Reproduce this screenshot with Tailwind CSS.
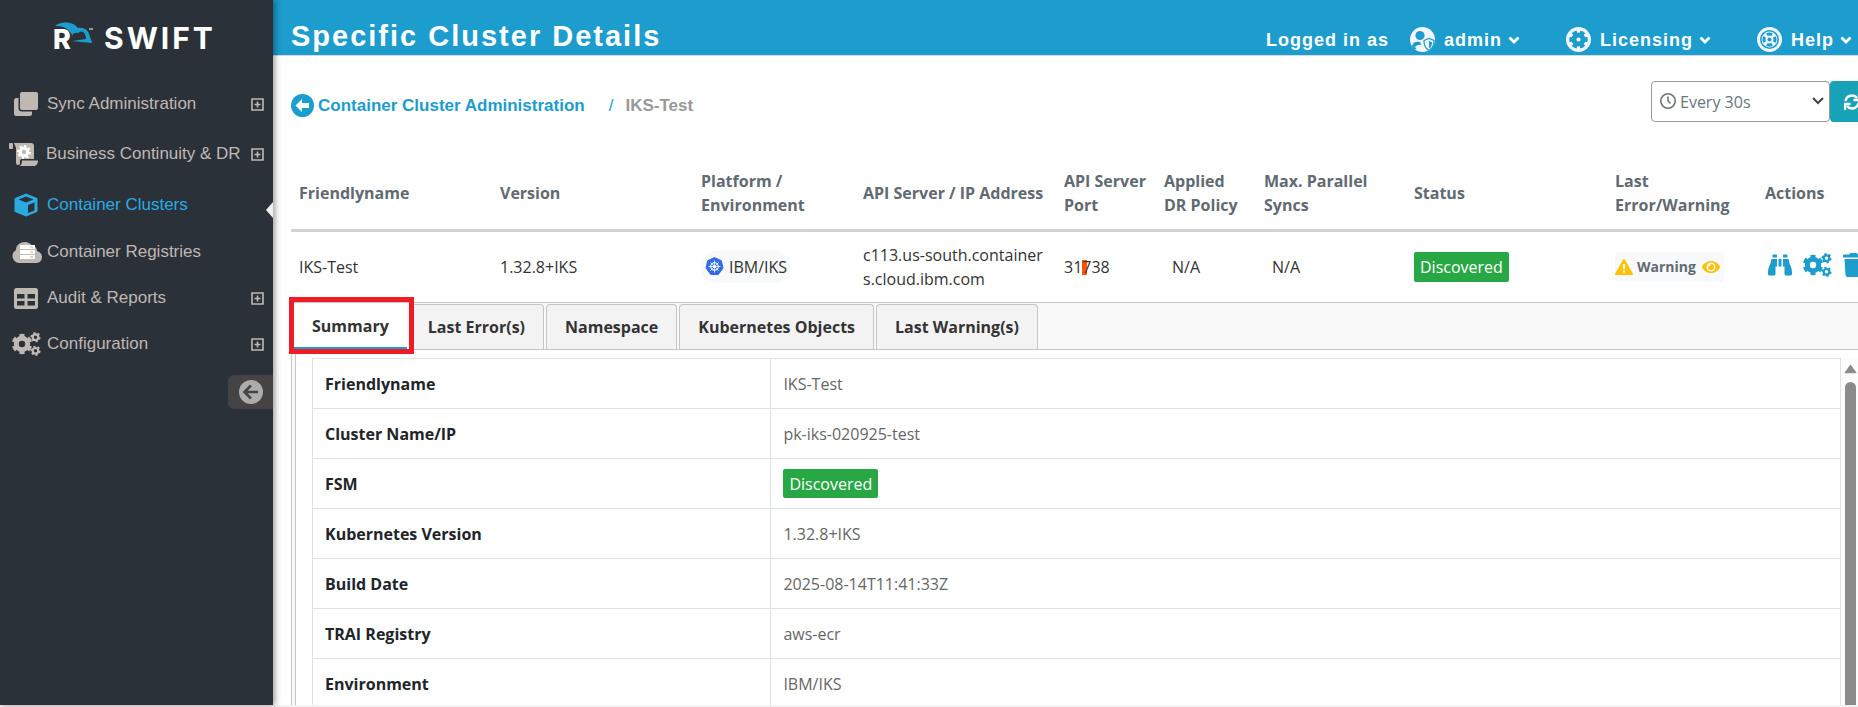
<!DOCTYPE html>
<html lang="en">
<head>
    <meta charset="UTF-8">
    <meta name="viewport" content="width=device-width, initial-scale=1.0">
    <title>Specific Cluster Details</title>
    <script src="https://cdn.jsdelivr.net/npm/@tailwindcss/browser@4"></script>
</head>
<body class="flex h-screen flex-col overflow-hidden bg-white font-['Open_Sans',sans-serif] text-base text-[#333]">
    <!-- shared icons -->
    <svg class="hidden">
        <symbol id="plus-box" viewBox="0 0 13 13">
            <path d="M1 1h11v11H1zM6.5 3.5v6M3.5 6.5h6" fill="none" stroke="currentColor" stroke-width="1.6"/>
        </symbol>
        <symbol id="chevron" viewBox="0 0 12 8">
            <path d="M1.500 1.500L6 6l4.500-4.500" fill="none" stroke="currentColor" stroke-width="2.8"/>
        </symbol>
        <symbol id="cogs" viewBox="0 0 29 24">
            <g fill="none" stroke="currentColor">
                <circle cx="10" cy="12" r="5.700" stroke-width="5"/>
                <circle cx="10" cy="12" r="8.700" stroke-width="3" pathLength="12" stroke-dasharray="1.100 .9" stroke-dashoffset="-.45"/>
                <circle cx="23.500" cy="5.200" r="2.800" stroke-width="2.200"/>
                <circle cx="23.500" cy="5.200" r="4.200" stroke-width="1.800" pathLength="12" stroke-dasharray="1 1"/>
                <circle cx="23.500" cy="18.800" r="2.800" stroke-width="2.200"/>
                <circle cx="23.500" cy="18.800" r="4.200" stroke-width="1.800" pathLength="12" stroke-dasharray="1 1"/>
            </g>
        </symbol>
    </svg>

    <div class="flex min-h-0 flex-1">
        <!-- sidebar -->
        <aside class="relative z-10 flex w-[273px] shrink-0 flex-col bg-[#2b3139] font-['Liberation_Sans',sans-serif] text-[17px] text-[#bfb8b3] shadow-[2px_0_6px_rgba(0,0,0,0.4)]">
            <a href="#" class="flex h-[76px] items-center pl-[53px] font-['Inter',sans-serif] font-bold text-white">
                <span class="relative w-[51px] pt-1 text-[27px] leading-8 font-extrabold">R
                    <svg class="absolute top-[2px] left-0 h-8 w-11" viewBox="0 0 44 32">
                        <path d="M2 4C7-1 20-1 25 6c7-1 11 3 12 9 1 3 2 5 2 6l-20-2 14-2c0-6-4-10-8-6-3-1-5 0-6 3 0-2-1-4-3-5C13 5 8 4 2 4z" fill="#1c9dcd"/>
                        <path d="M36 7h4" stroke="white"/>
                    </svg>
                </span>
                <span class="text-[30px] tracking-[3px]">SWIFT</span>
            </a>
            <nav class="flex flex-col">
                <a href="#" class="flex h-14 items-center gap-[9px] pr-[9px] pl-[14px]">
                    <svg class="h-6 w-6" viewBox="0 0 24 24" fill="currentColor">
                        <rect x="6" width="18" height="18" rx="2"/>
                        <path d="M4.500 6h-2A2.500 2.500 0 0 0 0 8.500v13A2.500 2.500 0 0 0 2.500 24h13a2.500 2.500 0 0 0 2.500-2.500v-2H8A3.500 3.500 0 0 1 4.500 16z"/>
                    </svg>
                    Sync Administration
                    <svg class="ml-auto h-[13px] w-[13px]"><use href="#plus-box"/></svg>
                </a>
                <a href="#" class="flex h-11 items-center gap-2 pr-[9px] pl-2 whitespace-nowrap">
                    <svg class="h-[23px] w-[30px] shrink-0" viewBox="0 0 30 23" fill="currentColor">
                        <rect x="1" width="4" height="6" rx="1"/>
                        <path d="M6 0h17a3 3 0 0 1 3 3v13H14a2 2 0 0 0-2 2v2a2 2 0 0 1-4 0V5z"/>
                        <path d="M14 17.500h16c0 3-1.500 5.500-4 5.500H10c3 0 4-2 4-5.500z"/>
                        <g fill="none" stroke="#fff"><circle cx="16" cy="9" r="3.800" stroke-width="3.200"/><circle cx="16" cy="9" r="6" stroke-width="2" pathLength="16" stroke-dasharray="1 1"/></g>
                    </svg>
                    Business Continuity &amp; DR
                    <svg class="ml-auto h-[13px] w-[13px] shrink-0"><use href="#plus-box"/></svg>
                </a>
                <a href="#" class="relative flex h-[58px] items-center gap-[9px] pl-[14px] text-[#29abe2]">
                    <svg class="h-6 w-6" viewBox="0 0 24 24">
                        <path d="M12 1L23 5.500v13L12 23 1 18.500v-13z" fill="currentColor" stroke="currentColor" stroke-linejoin="round"/>
                        <path d="M12 3.500l7.500 3L12 9.500l-7.500-3zM14 12l6.500-2.500v8L14 20z" fill="#2b3139"/>
                    </svg>
                    Container Clusters
                    <svg class="absolute right-0 bottom-4 h-4 w-[7px]" viewBox="0 0 7 16"><path d="M7 0v16L0 8z" fill="#f0f0f0"/></svg>
                </a>
                <a href="#" class="flex h-9 items-center gap-[5px] pl-3">
                    <svg class="h-[21px] w-[30px]" viewBox="0 0 30 21" fill="currentColor">
                        <path d="M7 21a7 7 0 0 1-3-13C4 3 8 0 13 0c3 0 5 1 7 4 3 0 5 2 5 5 3 1 5 3 5 6s-2 6-6 6z"/>
                        <path d="M8 3h15v4H8zM8 8h15v4H8zM8 13h15v4H8z" fill="#fff"/>
                        <path d="M18 5h3M18 10h3M18 15h3" stroke="currentColor"/>
                    </svg>
                    Container Registries
                </a>
                <a href="#" class="flex h-14 items-center gap-[9px] pr-[9px] pl-[14px]">
                    <svg class="h-[21px] w-6" viewBox="0 0 24 21">
                        <rect width="24" height="21" rx="2.500" fill="currentColor"/>
                        <path d="M3 6h7.500v4.500H3zM13.500 6H21v4.500h-7.500zM3 13h7.500v4.500H3zM13.500 13H21v4.500h-7.500z" fill="#2b3139"/>
                    </svg>
                    Audit &amp; Reports
                    <svg class="ml-auto h-[13px] w-[13px]"><use href="#plus-box"/></svg>
                </a>
                <a href="#" class="flex h-9 items-center gap-[6px] pr-[9px] pl-3">
                    <svg class="h-6 w-[29px]"><use href="#cogs"/></svg>
                    Configuration
                    <svg class="ml-auto h-[13px] w-[13px]"><use href="#plus-box"/></svg>
                </a>
            </nav>
            <button aria-label="Collapse menu" class="mt-[13px] flex h-[34px] w-[45px] items-center justify-center self-end rounded-l-md bg-[#444]">
                <svg class="h-6 w-6" viewBox="0 0 24 24">
                    <circle cx="12" cy="12" r="12" fill="#acacac"/>
                    <path d="M19 12H6M12 5.500L5.500 12l6.500 6.500" fill="none" stroke="#444" stroke-width="2.600"/>
                </svg>
            </button>
        </aside>

        <div class="flex min-w-0 flex-1 flex-col">
            <header class="flex h-14 shrink-0 items-center border-b border-[#d5dadd] bg-[#1c9dcd] pt-6 pl-[18px] font-['Liberation_Sans',sans-serif] text-lg font-bold tracking-[1px] whitespace-nowrap text-white">
                <h1 class="mb-2 text-[29px] leading-8 tracking-[2px]">Specific Cluster Details</h1>
                <span class="ml-auto">Logged in as</span>
                <button class="ml-[21px] flex items-center">
                    <svg class="mr-[9px] h-[25px] w-[25px]" viewBox="0 0 25 25">
                        <circle cx="12.500" cy="12.500" r="12.500" fill="#f4f6ff"/>
                        <g fill="#1c9dcd"><circle cx="10" cy="8.500" r="4.600"/><path d="M2 19c1-4 4-5 8-4l3 7H4z"/></g>
                        <path d="M5 20c3-3 6-3 9 0l-1 4H8z" fill="#f4f6ff"/>
                        <path d="M14 13.500l5-2 5 2c0 5-1 8-5 10-4-2-5-5-5-10z" fill="#f4f6ff" stroke="#1c9dcd" stroke-width="1.200"/>
                        <path d="M19 14v7.500c2-1 3-3.500 3-6.200z" fill="#1c9dcd"/>
                    </svg>
                    admin
                    <svg class="ml-[6px] h-2 w-3"><use href="#chevron"/></svg>
                </button>
                <button class="ml-[46px] flex items-center">
                    <svg class="mr-[9px] h-[25px] w-[25px]" viewBox="0 0 25 25">
                        <circle cx="12.500" cy="12.500" r="12.500" fill="#f4f6ff"/>
                        <g fill="none" stroke="#1c9dcd"><circle cx="12.500" cy="12.500" r="4.600" stroke-width="5"/><circle cx="12.500" cy="12.500" r="7.800" stroke-width="2.800" pathLength="12" stroke-dasharray="1.200 .8" stroke-dashoffset=".6"/></g>
                    </svg>
                    Licensing
                    <svg class="ml-[6px] h-2 w-3"><use href="#chevron"/></svg>
                </button>
                <button class="mr-[6px] ml-[46px] flex items-center">
                    <svg class="mr-[9px] h-[25px] w-[25px]" viewBox="0 0 25 25">
                        <circle cx="12.500" cy="12.500" r="12.500" fill="#f4f6ff"/>
                        <g fill="none" stroke="#1c9dcd"><circle cx="12.500" cy="12.500" r="8.700" stroke-width="1.600"/><circle cx="12.500" cy="12.500" r="5.500" stroke-width="3" pathLength="8" stroke-dasharray="1.300 .7" stroke-dashoffset=".65"/></g>
                        <circle cx="12.500" cy="12.500" r="2" fill="#1c9dcd"/>
                    </svg>
                    Help
                    <svg class="ml-[6px] h-2 w-3"><use href="#chevron"/></svg>
                </button>
            </header>

            <main class="flex min-h-0 flex-1 flex-col pl-[18px]">
                <div class="flex shrink-0 items-center pt-[25px]">
                    <nav class="flex items-center pt-2 font-['Liberation_Sans',sans-serif] text-[17px] font-bold">
                        <a href="#" class="flex items-center gap-1 text-[#1c9dcd]">
                            <svg class="h-[23px] w-[23px]" viewBox="0 0 23 23">
                                <circle cx="11.500" cy="11.500" r="11.500" fill="currentColor"/>
                                <path d="M4.500 11.500L11 5v4h7v5h-7v4z" fill="#fff"/>
                            </svg>
                            Container Cluster Administration
                        </a>
                        <span class="mr-3 ml-6 font-normal text-[#1c9dcd]">/</span>
                        <span class="text-[#999]">IKS-Test</span>
                    </nav>
                    <div class="-mr-5 ml-auto flex text-[#6c757d]">
                        <div class="relative">
                            <svg class="absolute top-3 left-[9px] h-4 w-4" viewBox="0 0 16 16" fill="none" stroke="currentColor" stroke-width="1.600"><circle cx="8" cy="8" r="7.200"/><path d="M8 3.500V8l2.500 2.500"/></svg>
                            <select aria-label="Refresh interval" class="h-[41px] w-[179px] appearance-none rounded border border-[#999] bg-white pl-7">
                                <option>Every 30s</option>
                            </select>
                            <svg class="absolute top-4 right-[6px] h-2 w-3 text-[#444]" viewBox="0 0 12 8"><path d="M1 1l5 5 5-5" fill="none" stroke="currentColor" stroke-width="2"/></svg>
                        </div>
                        <button aria-label="Refresh" class="flex h-[41px] w-12 items-center rounded-l bg-[#17a2b8] pl-[14px] text-white">
                            <svg class="h-4 w-4" viewBox="0 0 16 16" fill="none" stroke="currentColor" stroke-width="2.400"><path d="M1.500 7A6.500 6.500 0 0 1 13 4M14.500 9A6.500 6.500 0 0 1 3 12M15 0v6H9.500M1 16v-6h5.500"/></svg>
                        </button>
                    </div>
                </div>

                <table class="mt-9 w-full shrink-0 table-fixed text-left leading-6">
                    <colgroup>
                        <col class="w-[201px]">
                        <col class="w-[201px]">
                        <col class="w-[162px]">
                        <col class="w-[201px]">
                        <col class="w-[100px]">
                        <col class="w-[100px]">
                        <col class="w-[150px]">
                        <col class="w-[201px]">
                        <col class="w-[150px]">
                        <col class="w-[101px]">
                    </colgroup>
                    <thead class="border-b-3 border-[#d2d2d2] text-[#5f6a72]">
                        <tr class="h-[72px] *:px-2 *:font-bold">
                            <th>Friendlyname</th>
                            <th>Version</th>
                            <th>Platform / Environment</th>
                            <th class="whitespace-nowrap">API Server / IP Address</th>
                            <th>API Server Port</th>
                            <th>Applied DR Policy</th>
                            <th>Max. Parallel Syncs</th>
                            <th>Status</th>
                            <th>Last Error/Warning</th>
                            <th>Actions</th>
                        </tr>
                    </thead>
                    <tbody>
                        <tr class="h-[72px] *:px-2">
                            <td>IKS-Test</td>
                            <td>1.32.8+IKS</td>
                            <td>
                                <span class="inline-flex h-8 items-center gap-[5px] rounded-full bg-[#f8f9fa] px-1">
                                    <svg class="h-[19px] w-[19px]" viewBox="0 0 19 19">
                                        <path d="M9.500.5l6.800 3.200L18 11l-4.700 6.500H5.700L1 11l1.700-7.300z" fill="#326ce5" stroke="#326ce5" stroke-linejoin="round"/>
                                        <g fill="none" stroke="#fff"><circle cx="9.500" cy="9.500" r="3.800" stroke-width="1.100"/><path d="M9.500 3.500v12M3.500 9.500h12M5.300 5.300l8.400 8.400M13.700 5.300l-8.400 8.400" stroke-width=".8"/></g>
                                        <circle cx="9.500" cy="9.500" r="1.200" fill="#fff"/>
                                    </svg>
                                    IBM/IKS
                                </span>
                            </td>
                            <td class="break-all">c113.us-south.containers.cloud.ibm.com</td>
                            <td>31<span class="relative"><span class="absolute top-1 left-0 h-[15px] w-[5px] bg-[#ff5500]"></span><span class="relative">7</span></span>38</td>
                            <td class="pl-4!">N/A</td>
                            <td class="pl-4!">N/A</td>
                            <td><span class="inline-flex h-[30px] items-center rounded-xs bg-[#28a745] px-[6px] text-white">Discovered</span></td>
                            <td>
                                <span class="inline-flex h-[30px] items-center gap-1 rounded bg-[#f8f9fa] pr-1 text-sm font-bold text-[#5f6a72]">
                                    <svg class="h-4 w-[18px]" viewBox="0 0 18 16"><path d="M9 1l8 14H1z" fill="#ffc107" stroke="#ffc107" stroke-width="2" stroke-linejoin="round"/><path d="M9 5v5M9 11.500v2" stroke="#fff" stroke-width="2"/></svg>
                                    Warning
                                    <svg class="ml-[2px] h-4 w-[18px]" viewBox="0 0 576 512" fill="#ffc107"><path d="M572.520 241.400C518.290 135.590 410.930 64 288 64S57.680 135.640 3.480 241.410a32.350 32.350 0 0 0 0 29.190C57.710 376.410 165.070 448 288 448s230.320-71.640 284.520-177.410a32.350 32.350 0 0 0 0-29.190zM288 400a144 144 0 1 1 144-144 143.930 143.930 0 0 1-144 144zm0-240a95.310 95.310 0 0 0-25.310 3.790 47.850 47.850 0 0 1-66.900 66.900A95.780 95.780 0 1 0 288 160z"/></svg>
                                </span>
                            </td>
                            <td>
                                <div class="flex w-28 items-center gap-[11px] pb-1 pl-[3px] text-[#1c9dcd]">
                                    <button aria-label="Discover"><svg class="h-6 w-6" viewBox="0 0 512 512" fill="currentColor"><path d="M416 48c0-8.840-7.160-16-16-16h-64c-8.840 0-16 7.160-16 16v48h96V48zM63.910 159.990C61.400 253.840 3.460 274.220 0 404v44c0 17.670 14.330 32 32 32h96c17.670 0 32-14.330 32-32V288h32V128H95.840c-17.630 0-31.450 14.370-31.930 31.990zm384.180 0c-.48-17.620-14.300-31.990-31.930-31.990H320v160h32v160c0 17.670 14.330 32 32 32h96c17.670 0 32-14.330 32-32v-44c-3.460-129.780-61.400-150.160-63.910-244.010zM176 32h-64c-8.840 0-16 7.160-16 16v48h96V48c0-8.840-7.160-16-16-16zm48 256h64V128h-64v160z"/></svg></button>
                                    <button aria-label="Configure"><svg class="h-6 w-[29px]"><use href="#cogs"/></svg></button>
                                    <button aria-label="Delete"><svg class="h-6 w-[21px]" viewBox="0 0 448 512" fill="currentColor"><path d="M432 32H312l-9.400-18.700A24 24 0 0 0 281.100 0H166.800a23.720 23.720 0 0 0-21.400 13.300L136 32H16A16 16 0 0 0 0 48v32a16 16 0 0 0 16 16h416a16 16 0 0 0 16-16V48a16 16 0 0 0-16-16zM53.200 467a48 48 0 0 0 47.900 45h245.800a48 48 0 0 0 47.900-45L416 128H32z"/></svg></button>
                                </div>
                            </td>
                        </tr>
                    </tbody>
                </table>

                <!-- tabs -->
                <div class="flex min-h-0 flex-1 flex-col border-t border-l border-[#c5c5c5] bg-[#f9f9f9]">
                    <div class="flex h-[47px] shrink-0 gap-[2px] border-b border-[#c5c5c5] pt-px pl-[2px] font-bold">
                        <button class="relative border-b-2 border-[#1c9dcd] bg-white px-[18px]">
                            Summary
                            <span class="absolute -top-[7px] -right-[7px] -bottom-[7px] -left-[5px] border-5 border-[#ee1c25]"></span>
                        </button>
                        <button class="rounded-t border border-b-0 border-[#c5c5c5] bg-[#f3f3f3] px-[18px]">Last Error(s)</button>
                        <button class="rounded-t border border-b-0 border-[#c5c5c5] bg-[#f3f3f3] px-[18px]">Namespace</button>
                        <button class="rounded-t border border-b-0 border-[#c5c5c5] bg-[#f3f3f3] px-[18px]">Kubernetes Objects</button>
                        <button class="rounded-t border border-b-0 border-[#c5c5c5] bg-[#f3f3f3] px-[18px]">Last Warning(s)</button>
                    </div>
                    <div class="ml-[3px] flex min-h-0 flex-1 items-start overflow-hidden border-l border-[#c5c5c5] bg-white pt-2 pl-4">
                        <table class="w-full table-fixed text-left text-[#666] [&_td]:border [&_td]:border-[#dee2e6] [&_td]:px-3 [&_th]:w-[30%] [&_th]:border [&_th]:border-[#dee2e6] [&_th]:px-3 [&_th]:font-bold [&_th]:text-[#212529] [&_tr]:h-[50px]">
                            <tr><th>Friendlyname</th><td>IKS-Test</td></tr>
                            <tr><th>Cluster Name/IP</th><td>pk-iks-020925-test</td></tr>
                            <tr><th>FSM</th><td><span class="inline-flex h-[29px] items-center rounded-xs bg-[#28a745] px-[6px] text-white">Discovered</span></td></tr>
                            <tr><th>Kubernetes Version</th><td>1.32.8+IKS</td></tr>
                            <tr><th>Build Date</th><td>2025-08-14T11:41:33Z</td></tr>
                            <tr><th>TRAI Registry</th><td>aws-ecr</td></tr>
                            <tr><th>Environment</th><td>IBM/IKS</td></tr>
                        </table>
                        <div class="flex w-[17px] shrink-0 flex-col items-center gap-2 self-stretch bg-[#fcfcfc] pt-[6px] pl-px">
                            <svg class="h-[10px] w-[13px] shrink-0" viewBox="0 0 12 9"><path d="M6 1l5 7H1z" fill="#8b8b8b" stroke="#8b8b8b" stroke-linejoin="round"/></svg>
                            <div class="w-[11px] flex-1 rounded-t-full bg-[#8b8b8b]"></div>
                        </div>
                    </div>
                </div>
            </main>
        </div>
    </div>
    <div class="h-[2px] shrink-0 bg-[#f3f3f3]"></div>
</body>
</html>
